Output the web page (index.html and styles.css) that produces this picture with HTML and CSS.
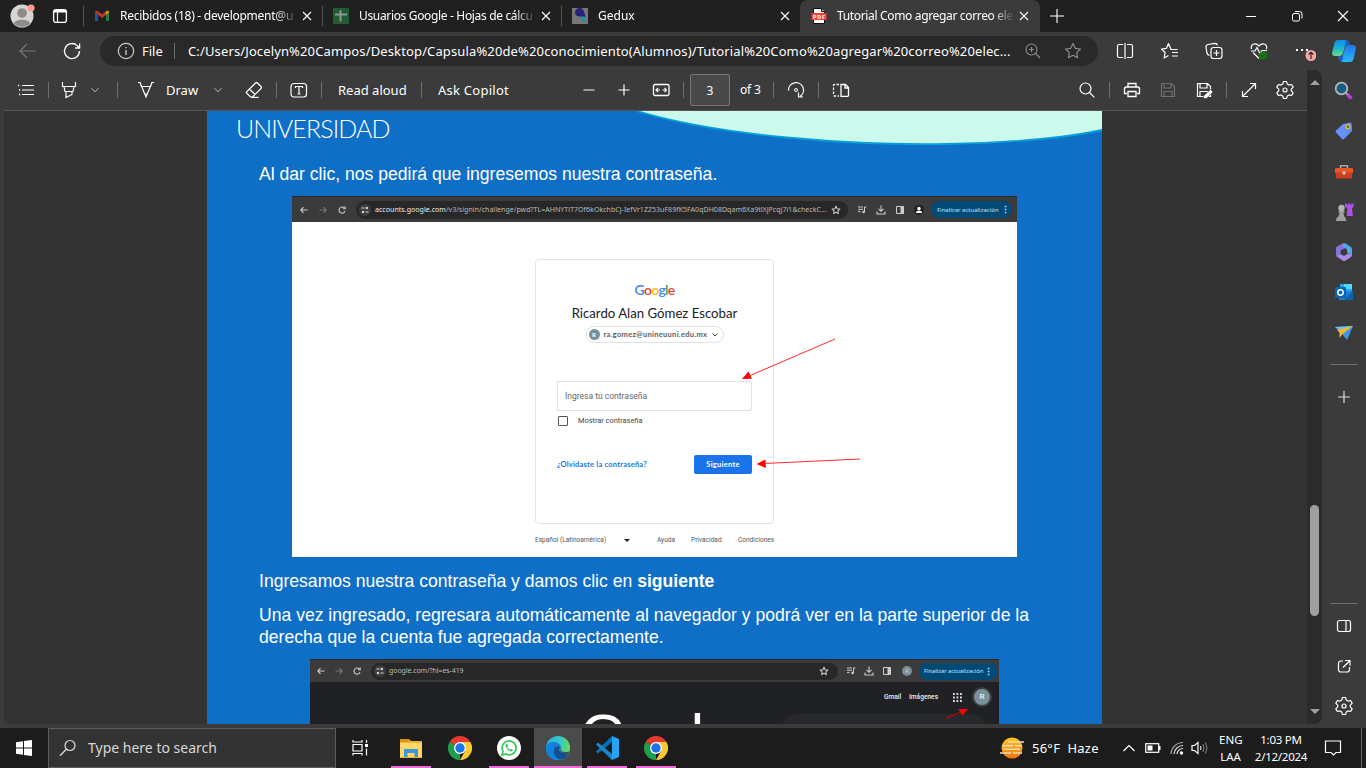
FILE: index.html
```html
<!DOCTYPE html>
<html lang="es">
<head>
<meta charset="utf-8">
<title>Tutorial Como agregar correo electronico</title>
<link rel="stylesheet" href="styles.css">
</head>
<body>
<svg class="defs" aria-hidden="true">
  <symbol id="x" viewBox="0 0 10 10"><path d="M1 1l8 8M9 1l-8 8" fill="none" stroke="currentColor" stroke-width="1.1"/></symbol>
  <symbol id="chev" viewBox="0 0 12 12"><path d="M2.500 4.200L6 7.800l3.500-3.600" fill="none" stroke="currentColor" stroke-width="1"/></symbol>
  <symbol id="gear" viewBox="0 0 24 24"><path d="M10.500 3.500h3l.8 2.600 1.700 1 2.600-.6 1.600 2.600-1.900 2v1.800l1.900 2-1.600 2.600-2.600-.6-1.700 1-.8 2.600h-3l-.8-2.600-1.700-1-2.600.6-1.600-2.600 1.900-2v-1.800l-1.900-2 1.600-2.600 2.600.6 1.700-1z" fill="none" stroke="currentColor" stroke-width="1.200" stroke-linejoin="round"/><circle cx="12" cy="12" r="2" fill="none" stroke="currentColor" stroke-width="1.200"/></symbol>
  <symbol id="star" viewBox="0 0 18 18"><path d="M9 1.500l2.300 4.800 5.200.7-3.800 3.600.9 5.200L9 13.300l-4.600 2.500.9-5.200L1.500 7l5.200-.7z" fill="none" stroke="currentColor" stroke-width="1.200" stroke-linejoin="round"/></symbol>
  <symbol id="ministar" viewBox="0 0 18 18"><path d="M9 2l2.100 4.600 4.900.6-3.600 3.400.9 4.900L9 13.100l-4.300 2.400.9-4.900L2 7.200l4.900-.6z" fill="none" stroke="currentColor" stroke-width="1.900" stroke-linejoin="round"/></symbol>
  <symbol id="chrome" viewBox="0 0 24 24"><path d="M12 12L1.600 6A12 12 0 0 1 22.400 6z" fill="#e33b2e"/><path d="M12 12l0 12A12 12 0 0 1 1.600 6z" fill="#1e9e4a"/><path d="M12 6h10.400A12 12 0 0 1 12 24l5.200-9z" fill="#fcc934"/><circle cx="12" cy="12" r="6" fill="#fff"/><circle cx="12" cy="12" r="4.700" fill="#1a73e8"/></symbol>
  <symbol id="back" viewBox="0 0 10 10"><path d="M8.500 5H2M4.500 2.200L1.800 5l2.700 2.800" fill="none" stroke="currentColor" stroke-width="1.100"/></symbol>
  <symbol id="reload" viewBox="0 0 10 10"><path d="M8 6.200A3.100 3.100 0 1 1 7.300 2.900M8.200 1.500v2.300H5.900" fill="none" stroke="currentColor" stroke-width="1.100"/></symbol>
  <symbol id="tune" viewBox="0 0 12 12"><circle cx="6" cy="6" r="6" fill="#3c3c3c"/><path d="M2.500 4h3M6.500 8h3" stroke="#ddd"/><circle cx="7.800" cy="4" r="1.200" fill="#ddd"/><circle cx="4" cy="8" r="1.200" fill="#ddd"/></symbol>
  <symbol id="music" viewBox="0 0 10 10"><path d="M1 2h5M1 4.300h5M1 6.600h2.500M7.500 7V2h2" fill="none" stroke="currentColor"/><circle cx="6.600" cy="7" r="1.300" fill="currentColor"/></symbol>
  <symbol id="down" viewBox="0 0 10 10"><path d="M5 .5v5.500M2.500 3.800L5 6.300l2.500-2.500M1 6.500v2.500h8V6.500" fill="none" stroke="currentColor" stroke-width="1.100"/></symbol>
  <symbol id="panel" viewBox="0 0 10 10"><path d="M1.500 1.500h7v7h-7z" fill="none" stroke="currentColor"/><path d="M5.500 1.500h3v7h-3z" fill="currentColor"/></symbol>
</svg>

<header class="tabs">
  <svg class="avatar" viewBox="0 0 26 24"><circle cx="12" cy="12" r="11.500" fill="#d8d5d0"/><circle cx="12" cy="9" r="4.800" fill="#8d8a87"/><path d="M4 19.500c1-5 15-5 16 0a11.500 11.500 0 0 1-16 0z" fill="#8d8a87"/><circle cx="21" cy="4" r="3.600" fill="#ff9c98"/></svg>
  <svg class="work" viewBox="0 0 16 16"><rect x="1.600" y="1.600" width="12.800" height="12.800" rx="2.500" fill="none" stroke="#fff" stroke-width="1.300"/><path d="M1.500 4.500V3.500q0-2 2-2h9q2 0 2 2v1z" fill="#fff"/><path d="M5.500 4v10" stroke="#fff" stroke-width="1.200"/></svg>
  <div class="tab">
    <svg class="fav" viewBox="0 0 16 16"><path d="M1 4v9h3V7z" fill="#27569e"/><path d="M15 4v9h-3V7z" fill="#2c7a44"/><path d="M1 4.500V3.500Q2.500 2 4 3.200L8 6.300l4-3.100q1.500-1.200 3 .3v1L8 10z" fill="#b83a31"/><path d="M12 3.200q1.500-1.200 3 .3v1.300L12 7z" fill="#c89a20"/></svg>
    <span class="ttl t1">Recibidos (18) - development@u</span><svg class="cl"><use href="#x"/></svg>
  </div>
  <div class="tab">
    <svg class="fav" viewBox="0 0 16 16"><rect width="16" height="16" rx="1" fill="#235c34"/><path d="M2 6.500h12M7.500 2.500v11" stroke="#8c9a8f" stroke-width="2"/></svg>
    <span class="ttl t2">Usuarios Google - Hojas de cálcu</span><svg class="cl"><use href="#x"/></svg>
  </div>
  <div class="tab">
    <svg class="fav" viewBox="0 0 16 16"><rect width="16" height="16" fill="#777"/><path d="M3 5a4.500 4.500 0 0 1 9-1q1.500 2.500 1 5.500L11 10Q9 8.500 7 8.500 3.500 8 3 5z" fill="#29217d"/><path d="M7 8.500h5q2.500 1 1 4.500l-2 2q-.5-4-4-6.500z" fill="#2791a4"/></svg>
    <span class="ttl">Gedux</span><svg class="cl"><use href="#x"/></svg>
  </div>
  <div class="tab on">
    <svg class="fav" viewBox="0 0 16 16"><path d="M2.500.5h8l3 3v12h-11z" fill="#fff" stroke="#111"/><path d="M10.500.5v3h3" fill="#ccc" stroke="#111"/><rect x=".5" y="5" width="15" height="7" fill="#f4403c"/><text x="8" y="10.700" font-size="5.500" font-weight="700" fill="#fff" text-anchor="middle" textLength="12">PDF</text></svg>
    <span class="ttl t4">Tutorial Como agregar correo ele</span><svg class="cl"><use href="#x"/></svg>
  </div>
  <svg class="newtab" viewBox="0 0 16 16"><path d="M8 1v14M1 8h14" stroke="#fff" stroke-width="1.100"/></svg>
  <div class="winbtns">
    <svg viewBox="0 0 12 12"><path d="M1 6.500h10" stroke="#fff"/></svg>
    <svg viewBox="0 0 12 12"><rect x="1.500" y="3.500" width="7" height="7.500" rx="1.500" fill="none" stroke="#fff"/><path d="M4 1.500h4.500q2.500 0 2.500 2.500v4.500" fill="none" stroke="#fff"/></svg>
    <svg viewBox="0 0 12 12"><path d="M1 1l10 10M11 1L1 11" stroke="#fff" stroke-width="1.100"/></svg>
  </div>
</header>

<nav class="nav">
  <svg class="i dim" viewBox="0 0 24 24"><path d="M20 12H4.500M11 5l-7 7 7 7" fill="none" stroke="currentColor" stroke-width="1.200"/></svg>
  <svg class="i reload" viewBox="0 0 24 24"><path d="M19.500 12a7.500 7.500 0 1 1-2.300-5.400L19.500 9M19.600 4.500V9h-4.500" fill="none" stroke="currentColor" stroke-width="1.300"/></svg>
  <div class="addr">
    <svg class="i" viewBox="0 0 24 24"><circle cx="12" cy="12" r="7.700" fill="none" stroke="#ccc" stroke-width="1.200"/><path d="M12 11v5M12 8v1.300" stroke="#ccc" stroke-width="1.300"/></svg>
    <span class="file">File</span><i class="vs"></i>
    <span class="url">C:/Users/Jocelyn%20Campos/Desktop/Capsula%20de%20conocimiento(Alumnos)/Tutorial%20Como%20agregar%20correo%20elec...</span>
    <svg class="i gray" viewBox="0 0 24 24"><circle cx="10.500" cy="10.500" r="5.500" fill="none" stroke="currentColor" stroke-width="1.100"/><path d="M14.500 14.500l4.500 4.500M8 10.500h5M10.500 8v5" stroke="currentColor" stroke-width="1.200"/></svg>
    <svg class="st gray"><use href="#star"/></svg>
  </div>
  <div class="navr">
    <svg class="i" viewBox="0 0 24 24"><path d="M10 5.500H6q-1.500 0-1.500 1.500v10q0 1.500 1.500 1.500h4M14 5.500h4q1.500 0 1.500 1.500v10q0 1.500-1.500 1.500h-4M12 4v16" fill="none" stroke="currentColor" stroke-width="1.200"/></svg>
    <svg class="i" viewBox="0 0 24 24"><path d="M19.500 10.500H13L10.500 4.500 8.300 9.400l-4.800.7 3.600 3.400-1 5.500 4.400-2.500M14 13.500h6M14 17h6" fill="none" stroke="currentColor" stroke-width="1.200" stroke-linejoin="round"/></svg>
    <svg class="i" viewBox="0 0 24 24"><rect x="9" y="8.500" width="11" height="11" rx="2.500" fill="none" stroke="currentColor" stroke-width="1.200"/><path d="M14.500 11v6M11.500 14h6M7.500 16.500Q5.500 16 5 14L4 8.500Q3.700 6 6 5.500l7-1.200q2 0 2.500 2" fill="none" stroke="currentColor" stroke-width="1.200"/></svg>
    <svg class="i" viewBox="0 0 24 24"><path d="M4.500 10Q3.500 6 7 5q3-.5 5 2 2-2.500 5-2 3.500 1 2.500 5M6 13.500l6 6M4 12h4l2-3.500 3 6 2-3h5" fill="none" stroke="currentColor" stroke-width="1.200"/><circle cx="16" cy="16.500" r="4" fill="#107c10"/><path d="M14.200 16.500l1.300 1.300 2.500-2.500" fill="none" stroke="#232"/></svg>
    <svg class="i more" viewBox="0 0 24 24"><path d="M4 11h2M9 11h2M14 11h2" stroke="currentColor" stroke-width="2"/><circle cx="19" cy="16.500" r="5.500" fill="#f6a5a1"/><path d="M19 20v-6.500M16.700 15.500l2.300-2.300 2.300 2.300" fill="none" stroke="#222" stroke-width="1.100"/></svg>
    <svg class="cop" viewBox="0 0 24 24"><defs><linearGradient id="c1" x1="0" y1="0" x2="0" y2="1"><stop offset="0" stop-color="#188be8"/><stop offset=".5" stop-color="#18b3d3"/><stop offset="1" stop-color="#70db77"/></linearGradient><linearGradient id="c2" x1="0" y1="0" x2="0" y2="1"><stop offset="0" stop-color="#2275e8"/><stop offset="1" stop-color="#22bcf7"/></linearGradient></defs><path d="M6 1h8q3 0 3.500 5H15q-2 0-2.500 3l-1.500 5q-1 3-4 3H3q-4 0-2.500-5L2.500 4q1-3 3.500-3z" fill="url(#c1)"/><path d="M14 1q3 0 3.500 5H15q-2 0-2.500 3z" fill="#1462bb"/><path d="M18 23h-8q-3 0-3.500-6H9q2 0 2.500-3l1.500-5q1-3 4-3h4q4 0 2.500 5l-2 9q-1 3-3.500 3z" fill="url(#c2)"/><path d="M10 23q-3 0-3.500-6H9q2 0 2.500-2z" fill="#1b58d8"/></svg>
  </div>
</nav>

<main class="main">
  <section class="viewer">
    <div class="content">
      <div class="bar">
        <svg class="i m10" viewBox="0 0 24 24"><path d="M8 7.500h12M8 12h12M8 16.500h12" stroke="currentColor" stroke-width="1.200"/><path d="M4 7.500h1.200M5 12h1.200M5 16.500h1.200" stroke="currentColor" stroke-width="1.300"/></svg>
        <i class="vs m10"></i>
        <svg class="i m8" viewBox="0 0 24 24"><path d="M5.500 4v4.500h13V4M7 8.500l1 5h8l1-5M9 13.500v6l6-3v-3" fill="none" stroke="currentColor" stroke-width="1.200"/></svg>
        <svg class="ch m8"><use href="#chev"/></svg>
        <i class="vs m16"></i>
        <svg class="i m16" viewBox="0 0 24 24"><path d="M4 4.500h2l6 14.500 6-14.500h2M6 4.500L7.500 8.500h9L18 4.500M10.500 16h3" fill="none" stroke="currentColor" stroke-width="1.200"/></svg>
        <span class="lb m8 w32">Draw</span>
        <svg class="ch m14"><use href="#chev"/></svg>
        <svg class="i m18" viewBox="0 0 24 24"><path d="M4.500 14l9-9q1-1 2 0l3.500 3.500q1 1 0 2l-8.500 8.500H8.500L4.500 15q-.5-.5 0-1zM7.500 11l5.500 5.500M9 19.300h7.500" fill="none" stroke="currentColor" stroke-width="1.200"/></svg>
        <i class="vs m10"></i>
        <svg class="i m10" viewBox="0 0 24 24"><rect x="4" y="5.500" width="15.500" height="13.500" rx="3" fill="none" stroke="currentColor" stroke-width="1.200"/><path d="M8.500 10V8.500h7V10M12 8.500V16M10.500 16h3" fill="none" stroke="currentColor" stroke-width="1.200"/></svg>
        <i class="vs m10"></i>
        <span class="lb m16 w70">Read aloud</span>
        <i class="vs m13"></i>
        <span class="lb m16 w72 ask">Ask Copilot</span>
        <svg class="i m67" viewBox="0 0 24 24"><path d="M6.500 12h11" stroke="#bbb" stroke-width="1.300"/></svg>
        <svg class="i m11" viewBox="0 0 24 24"><path d="M6.500 12h11M12 6.500v11" stroke="currentColor" stroke-width="1.200"/></svg>
        <svg class="i m13" viewBox="0 0 24 24"><rect x="4.500" y="6.500" width="15.500" height="11" rx="1.500" fill="none" stroke="currentColor" stroke-width="1.300"/><path d="M7 12h4M13.500 12h4M9 10l-2 2 2 2M15.500 10l2 2-2 2" fill="none" stroke="currentColor" stroke-width="1.100"/></svg>
        <i class="vs m10"></i>
        <span class="pg m6">3</span>
        <span class="of m10">of 3</span>
        <i class="vs m12"></i>
        <svg class="i m10" viewBox="0 0 24 24"><path d="M4.500 12.500a7.500 7.500 0 1 1 11.500 6M19 19h-4.500v-4.500" fill="none" stroke="currentColor" stroke-width="1.200"/><circle cx="12" cy="12" r="1.500" fill="none" stroke="currentColor"/></svg>
        <i class="vs m10"></i>
        <svg class="i m10" viewBox="0 0 24 24"><path d="M12 6.500h4.500l3 3v8q0 .8-.8.800H12zM16 6.500v3.500h3.500" fill="none" stroke="currentColor" stroke-width="1.300"/><path d="M10 6.500H5.500q-1 0-1 1v9.500q0 1 1 1H10" fill="none" stroke="currentColor" stroke-width="1.300" stroke-dasharray="2.500 1.500"/></svg>
        <svg class="i m222" viewBox="0 0 24 24"><circle cx="10.500" cy="10.500" r="5.500" fill="none" stroke="currentColor" stroke-width="1.200"/><path d="M14.500 14.500l4.800 4.800" stroke="currentColor" stroke-width="1.200"/></svg>
        <i class="vs m10"></i>
        <svg class="i m10" viewBox="0 0 24 24"><path d="M8 9V5.500h8V9M7 15.500H4.500V11q0-2 2-2h11q2 0 2 2v4.500H17M8 13.500h8v5H8z" fill="none" stroke="currentColor" stroke-width="1.300"/></svg>
        <svg class="i m12 dk" viewBox="0 0 24 24"><path id="fl" d="M5.500 5.500h10l3 3v10h-13zM8 5.500v4.500h7V5.500M8 18.500v-5h8v5" fill="none" stroke="currentColor" stroke-width="1.200"/></svg>
        <svg class="i m12" viewBox="0 0 24 24"><use href="#fl"/><path d="M18.500 11.500l2.500 2.500-6.500 6.500H11.500V18z" fill="#fff" stroke="#3b3b3b" stroke-width=".6"/></svg>
        <i class="vs m10"></i>
        <svg class="i m10" viewBox="0 0 24 24"><path d="M5.500 18.500L18.500 5.500M13 5.500h5.500V11M5.500 13v5.500H11" fill="none" stroke="currentColor" stroke-width="1.200"/></svg>
        <svg class="i m12"><use href="#gear"/></svg>
      </div>
      <div class="doc">
        <article class="page">
          <svg class="wave" viewBox="0 0 465 35"><path d="M0 0C85 26 220 34.500 310 33Q410 31 465 19V0z" fill="#cbf9ec"/><path d="M-2 -.5C85 26 220 34.500 310 33Q410 31 465 19" fill="none" stroke="#05a0d8" stroke-width="1.800"/></svg>
          <div class="uni">UNIVERSIDAD</div>
          <p class="p1">Al dar clic, nos pedirá que ingresemos nuestra contraseña.</p>
          <div class="shot s1">
            <div class="cbar">
              <svg class="s"><use href="#back"/></svg><svg class="s flip"><use href="#back"/></svg><svg class="s"><use href="#reload"/></svg>
              <div class="cpill"><svg class="tune"><use href="#tune"/></svg><span class="curl"><b>accounts.google.com</b>/v3/signin/challenge/pwd?TL=AHNYTlT7Of6kOkchbCj-IefVr1ZZ53uF89fK5FA0qDH08Dqam6Xa9tlXjPcqj7i1&amp;checkC...</span><svg class="s"><use href="#ministar"/></svg></div>
              <svg class="s ms"><use href="#music"/></svg><svg class="s"><use href="#down"/></svg><svg class="s"><use href="#panel"/></svg>
              <svg class="s" viewBox="0 0 10 10"><circle cx="5" cy="5" r="5" fill="#202020"/><circle cx="5" cy="3.500" r="1.700" fill="#fff"/><path d="M2 8Q2 5.500 5 5.500T8 8z" fill="#fff"/></svg>
              <div class="upd"><span>Finalizar actualización</span><b>⋮</b></div>
            </div>
            <div class="login">
              <div class="card">
                <div class="glogo"><b class="gb">G</b><b class="gr">o</b><b class="gy">o</b><b class="gb">g</b><b class="gg">l</b><b class="gr">e</b></div>
                <div class="name">Ricardo Alan Gómez Escobar</div>
                <div class="chip"><i>R</i><span>ra.gomez@unineuuni.edu.mx</span><svg viewBox="0 0 12 12"><path d="M2.500 4L6 7.500 9.500 4" fill="none" stroke="#444" stroke-width="1.500"/></svg></div>
                <div class="input"><span>Ingresa tu contraseña</span></div>
                <div class="check"><i></i><span>Mostrar contraseña</span></div>
                <div class="acts"><a>¿Olvidaste la contraseña?</a><button>Siguiente</button></div>
              </div>
              <div class="foot"><span class="f1">Español (Latinoamérica)</span><i></i><span class="f2">Ayuda</span><span class="f3">Privacidad</span><span class="f4">Condiciones</span></div>
            </div>
            <svg class="arrows" viewBox="0 0 725 361"><g fill="#f00" stroke="none"><path d="M450 183l6.500-7.500 3.500 7.300z"/><path d="M464.500 268l9-4.500.4 8.500z"/></g><path d="M543 143l-86 37M568 263l-96 4.500" stroke="#ff2a2a" stroke-width="1"/></svg>
          </div>
          <p class="p2">Ingresamos nuestra contraseña y damos clic en <b>siguiente</b></p>
          <p class="p3">Una vez ingresado, regresara automáticamente al navegador y podrá ver en la parte superior de la<br><span>derecha que la cuenta fue agregada correctamente.</span></p>
          <div class="shot s2">
            <div class="cbar">
              <svg class="s"><use href="#back"/></svg><svg class="s flip"><use href="#back"/></svg><svg class="s"><use href="#reload"/></svg>
              <div class="cpill"><svg class="tune"><use href="#tune"/></svg><span class="curl">google.com/?hl=es-419</span><svg class="s"><use href="#ministar"/></svg></div>
              <svg class="s"><use href="#music"/></svg><svg class="s"><use href="#down"/></svg><svg class="s"><use href="#panel"/></svg>
              <i class="mini">R</i>
              <div class="upd"><span>Finalizar actualización</span><b>⋮</b></div>
            </div>
            <div class="ghome">
              <div class="gtop"><span class="gm">Gmail</span><span class="im">Imágenes</span><svg viewBox="0 0 9 9"><path d="M0 1h9M0 4.500h9M0 8h9" stroke="#ddd" stroke-width="1.800" stroke-dasharray="1.800 1.700"/></svg><i>R</i></div>
              <div class="gbig"><span>G</span><span>l</span></div>
              <div class="gpill"></div>
              <svg class="garrow" viewBox="0 0 24 12"><path d="M0 10.500L14 4" stroke="#c40000" stroke-width="1.200"/><path d="M22.500 1l-6.500 6.500-3.500-6.500z" fill="#f00"/></svg>
            </div>
          </div>
        </article>
      </div>
    </div>
    <div class="scroll"><i class="up"></i><i class="thumb"></i><i class="dn"></i></div>
  </section>
  <aside class="side">
    <svg viewBox="0 0 20 20"><circle cx="7.500" cy="7.500" r="5.800" fill="#155d86" stroke="#b8b8b8" stroke-width="1.800"/><path d="M12 12l2 2" stroke="#aaa" stroke-width="2"/><path d="M13.700 13.700l3.800 3.800" stroke="#c23df0" stroke-width="3.300"/></svg>
    <svg viewBox="0 0 20 20"><path d="M9 3l7-1.500q1.500 0 1.700 1.500l.3 6q0 1-1 2l-7 7q-1 1-2 0L2 11.500q-1-1 0-2z" fill="#6490f8"/><circle cx="14" cy="5.700" r="1.900" fill="#555" stroke="#e5c210" stroke-width="1.200"/></svg>
    <svg viewBox="0 0 20 20"><path d="M6.500 7V4.700h7V7" fill="none" stroke="#aaa" stroke-width="1.500"/><path d="M1 8q0-1 1-1h16q1 0 1 1v4H1z" fill="#e8562a"/><path d="M2 11.500h16v5q0 1-1 1H3q-1 0-1-1z" fill="#c8401d"/><circle cx="10" cy="12" r="1.700" fill="#ccc"/></svg>
    <svg viewBox="0 0 20 20"><path d="M11 1.500h2V3h1.200V1.500h2.300V3h1V1.500h2v3.500l-1.500 1 .8 8h-6l.5-8-2.300-1z" fill="#b052e8"/><circle cx="7.500" cy="6" r="3.200" fill="#b4b4b4"/><path d="M4.500 9h6v1.500h-1q0 4 2 5.500l1 3H2l.5-3q3-2 3-5.500h-1z" fill="#a0a0a0"/></svg>
    <svg viewBox="0 0 20 20"><path d="M9.500 1L3 4.500Q2 5 2 6.500V14l4.500-2V8.500L13 5z" fill="#8274dc"/><path d="M9.500 1q1 0 2 .5L17 5q1 .5 1 2v6.500l-5-3V7.500L8.500 4.500z" fill="#53a5ed"/><path d="M18 13q0 1.500-1 2l-5.500 3.500q-1.500 1-3 0L2 14l4.500-2 3.500 2 4-2.500z" fill="#a98bec"/></svg>
    <svg viewBox="0 0 20 20"><path d="M6 2h12v8H6z" fill="#25a7e9"/><path d="M10 2h8v5h-8z" fill="#50d9ff"/><path d="M5 9h14v9H5z" fill="#1680d2"/><path d="M19 9l-9 9h9z" fill="#0f5faa"/><rect x="1" y="5" width="11" height="11" rx="1" fill="#0364b8"/><circle cx="6.500" cy="10.500" r="2.700" fill="none" stroke="#fff" stroke-width="1.500"/></svg>
    <svg viewBox="0 0 20 20"><path d="M1 5l18-1-6 14-5-6z" fill="#3b96ee"/><path d="M1 5l18-1L8 9z" fill="#64c8fa"/><path d="M19 4L3 8l2.500 2.500V16L8.500 12z" fill="#f6b928"/></svg>
    <i class="hr"></i>
    <svg class="pl" viewBox="0 0 20 20"><path d="M10 4v12M4 10h12" stroke="#ddd" stroke-width="1.200"/></svg>
    <i class="hr h2"></i>
    <svg class="sb" viewBox="0 0 20 20"><rect x="3.500" y="4.500" width="13" height="11" rx="2" fill="none" stroke="#fff" stroke-width="1.200"/><path d="M12 4.500v11" stroke="#fff" stroke-width="1.200"/></svg>
    <svg class="sb" viewBox="0 0 20 20"><path d="M9 5H7Q4.500 5 4.500 7.500v6Q4.500 16 7 16h6q2.500 0 2.500-2.500V11M11 4.500h5v5M16 4.500l-7 7" fill="none" stroke="#fff" stroke-width="1.200"/></svg>
    <svg class="sb gg2"><use href="#gear"/></svg>
  </aside>
</main>

<footer class="task">
  <div class="start"><svg viewBox="0 0 16 16"><path d="M0 2.200l7-1v6.300H0zM8 1l8-1v7.500H8zM0 8.500h7v6.300l-7-1zM8 8.500h8V16l-8-1z" fill="#fff"/></svg></div>
  <div class="search"><svg viewBox="0 0 18 18"><circle cx="11" cy="6.500" r="5" fill="none" stroke="#ddd" stroke-width="1.200"/><path d="M7.500 10L1 16.800" stroke="#ddd" stroke-width="1.300"/></svg><span>Type here to search</span></div>
  <div class="app nb"><svg class="tv" viewBox="0 0 16 16"><path d="M1 4.500h9v6.500H1zM1 0v2h9V0M1 15.500V13.500h9v2M14.500 0v3M14.500 8.500v7" fill="none" stroke="#fff" stroke-width="1.200"/><path d="M13 4h3v3h-3z" fill="#fff"/></svg></div>
  <div class="app ex"><svg viewBox="0 0 24 24"><path d="M1 3h9l2 2h11v17H1z" fill="#f0b429"/><path d="M1 3h9v3H1z" fill="#db9412"/><path d="M1 7h22v14H1z" fill="#ffd76b"/><path d="M5 13h14v8h-3.500v-4h-7v4H5z" fill="#3c96dc"/></svg></div>
  <div class="app ch1"><svg><use href="#chrome"/></svg></div>
  <div class="app wa"><svg viewBox="0 0 24 24"><circle cx="12" cy="12" r="12" fill="#fff"/><path d="M5 19l1-3.700A7 7 0 1 1 8.700 18z" fill="none" stroke="#35c85a" stroke-width="1.700"/><path d="M9 8q-1 1 0 3 2 4 5 4.500 2-.2 2-1.800l-2-1-1 1q-2-.8-2.700-2.700l.7-1L10 7.800z" fill="#35c85a"/></svg></div>
  <div class="app ed"><svg viewBox="0 0 24 24"><defs><linearGradient id="e1"><stop offset="0" stop-color="#27aee4"/><stop offset=".6" stop-color="#37c9c5"/><stop offset="1" stop-color="#6ae04f"/></linearGradient></defs><circle cx="12" cy="12" r="12" fill="url(#e1)"/><path d="M0 12q1-6 7-6 7 0 8 5l-2 3q1 4 9 3-3 7-10 7Q0 23.500 0 12z" fill="#1480d8"/><path d="M8 13q2-4 6-2l-1 3q1 4 9.500 3.500-2 5-8 6.200Q7 21 8 13z" fill="#104f96"/><path d="M13.500 14q1.500-1 1.500-3.500.5 2-.5 4 3 2.500 9 1L22.500 17.500q-7.500 1-9-3.500z" fill="#4b4b4b"/></svg></div>
  <div class="app vs1"><svg viewBox="0 0 24 24"><path d="M17 0l7 3v18l-7 3z" fill="#26a3f2"/><path d="M17 6L3 17.500l-2-2L17 0z" fill="#0a70b8"/><path d="M17 18L3 6.500l-2 2L17 24z" fill="#1788d2"/></svg></div>
  <div class="app ch2"><svg><use href="#chrome"/></svg></div>
  <div class="tray">
    <svg class="haze" viewBox="0 0 24 22"><defs><linearGradient id="h" x2="0" y2="1"><stop offset="0" stop-color="#ffc91f"/><stop offset="1" stop-color="#f2730d"/></linearGradient></defs><circle cx="12" cy="11" r="10.500" fill="url(#h)"/><path d="M8 5h16M2 8.700h11M15 8.700h7M3 12.300h17M0 16h11M13 16h9" stroke="#f2dcb8" stroke-width="1.600"/></svg>
    <span class="tmp">56°F&nbsp; Haze</span>
    <svg class="car" viewBox="0 0 14 10"><path d="M1.500 8L7 2.500 12.500 8" fill="none" stroke="#fff" stroke-width="1.200"/></svg>
    <svg class="bat" viewBox="0 0 16 10"><rect x=".7" y=".7" width="13" height="8.600" fill="none" stroke="#fff" stroke-width="1.200"/><path d="M14 3h1.500v4H14z" fill="#fff"/><path d="M2.500 2.500h5v5h-5z" fill="#fff"/></svg>
    <svg class="wifi" viewBox="0 0 14 14"><g fill="none" stroke="#aaa" stroke-width="1.200"><path d="M1 13A12 12 0 0 1 13 1.500"/><path d="M4 13a9 9 0 0 1 9-8.500" stroke="#ddd"/><path d="M7 13a6 6 0 0 1 6-5.500" stroke="#eee"/></g><circle cx="11.500" cy="12" r="1.700" fill="#fff"/></svg>
    <svg class="spk" viewBox="0 0 18 14"><path d="M1 4.500h2.500L7 1.500v11L3.500 9.500H1z" fill="none" stroke="#fff" stroke-width="1.200"/><path d="M9.500 5q1 2 0 4" fill="none" stroke="#fff"/><path d="M12 3q2 4 0 8M14.500 1.500q3 5.500 0 11" fill="none" stroke="#888"/></svg>
    <span class="lang">ENG<br>LAA</span>
    <span class="clock">1:03 PM<br>2/12/2024</span>
    <svg class="note" viewBox="0 0 18 18"><path d="M1.500 2h15v11.500H12L9.500 16 7 13.500H1.500z" fill="none" stroke="#fff" stroke-width="1.200"/></svg>
    <i class="desk"></i>
  </div>
</footer>
</body>
</html>
```
FILE: styles.css
```css
*{box-sizing:border-box}
body{margin:0;width:1366px;height:768px;overflow:hidden;background:#3b3b3b;color:#fff;font:13px/1 "Noto Sans",sans-serif;display:flex;flex-direction:column}
svg,i,span{flex:none;display:block}
i{font-style:normal}
span,p{white-space:nowrap}
.defs{width:0;height:0;position:absolute}
.i{width:24px;height:24px}
.vs{width:1px;height:16px;background:#6e6e6e}

.tabs{flex:none;height:32px;background:#202020;display:flex;align-items:center;padding-left:10px}
.avatar{width:26px;height:24px}
.work{width:16px;height:16px;margin:0 15px 0 16px}
.tab{width:239px;height:32px;display:flex;align-items:center;padding-left:11px;font-size:12px;position:relative}
.tab:not(.on)::before{content:"";position:absolute;left:0;top:6px;width:1px;height:20px;background:#555}
.fav{width:16px;height:16px;margin-right:10px}
.ttl{width:178px;height:20px;line-height:20px;margin-right:4px;-webkit-mask-image:linear-gradient(90deg,#000 155px,transparent 178px);mask-image:linear-gradient(90deg,#000 155px,transparent 178px)}
.t1{letter-spacing:-.25px}
.t2,.t4{letter-spacing:-.34px}
.cl{width:10px;height:10px}
.on{background:#3b3b3b;border-radius:8px 8px 0 0;width:240px}
.newtab{width:16px;height:16px;margin-left:9px}
.winbtns{display:flex;gap:34px;margin-left:auto;padding-right:17px}
.winbtns svg{width:12px;height:12px}

.nav{flex:none;height:38px;display:flex;align-items:center;padding-left:16px}
.dim{color:#777}
.reload{margin:0 16px 0 20px}
.addr{width:998px;height:30px;border-radius:15px;background:#292929;display:flex;align-items:center;padding-left:14px}
.file{width:22px;margin:0 10px 0 4px}
.url{width:824px;margin:0 9px 0 13px;letter-spacing:.13px}
.gray{color:#8c8c8c}
.st{width:18px;height:18px;margin-left:19px}
.navr{display:flex;align-items:center;gap:20.700px;margin-left:15px}
.cop{width:24px;height:24px;margin-left:-4px}

.main{flex:none;height:658px;display:flex}
.viewer{width:1318px;height:654px;margin-left:4px;border-radius:8px;overflow:hidden;display:flex;background:#333}
.content{width:1303px}
.bar{height:41px;background:#3b3b3b;border-bottom:1px solid #555;display:flex;align-items:center}
.bar .dk{color:#6e6e6e}
.ask{letter-spacing:.25px}
.ch{width:12px;height:12px;color:#bbb}
.m6{margin-left:6px}.m8{margin-left:8px}.m10{margin-left:10px}.m11{margin-left:11px}.m12{margin-left:12px}.m13{margin-left:13px}.m14{margin-left:14px}.m16{margin-left:16px}.m18{margin-left:18px}.m67{margin-left:67px}.m222{margin-left:222px}
.w32{width:32px}.w70{width:70px}.w72{width:72px}
.pg{width:40px;height:32px;border:1px solid #777;border-radius:2px;background:#484848;text-align:center;line-height:31px;font-size:12px}
.of{width:21px;font-size:12px;letter-spacing:-.2px}
.doc{height:613px;overflow:hidden;padding-left:203px}
.page{width:895px;height:613px;background:#0f6fc7;position:relative;font-family:"Liberation Sans",sans-serif}
.wave{position:absolute;right:0;top:0;width:465px;height:35px}
.page p{margin:0 0 0 52px;font-size:17.580px;line-height:22px}
.uni{font:300 25px/32px Lato,sans-serif;padding:1px 0 0 29px;height:52px;letter-spacing:-.9px}
.p1{height:33px}
.shot{overflow:hidden;position:relative}
.s1{width:725px;height:361px;margin:0 0 0 85px;background:#fff}
.p2{padding-top:13px;height:47px}
.p3{height:55px}
.s2{width:689px;height:66px;margin-left:103px;background:#202124}
.cbar{height:26px;background:#3b3b3b;border-top:1px solid #2a2a2a;display:flex;align-items:center;padding-left:7px;gap:9px;color:#ccc;font-family:"Noto Sans",sans-serif;font-size:7px}
.s{width:10px;height:10px}
.flip{transform:scaleX(-1);color:#777}
.cpill{width:492px;height:18px;border-radius:9px;background:#282828;display:flex;align-items:center;padding-left:3px}
.tune{width:12px;height:12px}
.curl{width:453px;margin:0 3px 0 4px;color:#bbb;line-height:10px;letter-spacing:.04px}
.curl b{font-weight:400;color:#eee}
.upd{width:81px;height:17px;border-radius:9px;background:#004a77;color:#c2e7ff;display:flex;align-items:center;padding-left:6px;font-size:6px;margin-left:-2px}
.upd span{width:64px}
.upd b{font-size:9px}
.s2 .cbar{height:23px;gap:8px;padding-left:6px}
.s2 .cpill{width:467px;height:17px;margin-left:1px}
.s2 .curl{width:427px;margin-left:3px;letter-spacing:-.08px}
.s2 .upd{margin-left:-1px;width:79px;padding-left:5px}
.s2 .upd span{width:60px;letter-spacing:-.1px}
.mini{width:10px;height:10px;margin-left:2px;border-radius:50%;background:#78909c;text-align:center;font-size:6px;line-height:10px}
.login{padding:37px 0 0 243px;color:#444}
.card{width:239px;height:265px;border:1px solid #e3e4e6;border-radius:4px;padding:21px 21px 0;display:flex;flex-direction:column}
.glogo{font:14px/18px Lato,sans-serif;text-align:center;letter-spacing:-.7px}
.glogo b{font-weight:600}
.gb{color:#4285f4}.gr{color:#ea4335}.gy{color:#fbbc05}.gg{color:#34a853}
.name{font:13.200px/16px Lato,sans-serif;color:#202124;text-align:center;white-space:nowrap;margin:6px -5px 0}
.chip{width:138px;height:17px;align-self:center;margin-top:5px;border:1px solid #dfe1e4;border-radius:9px;display:flex;align-items:center;padding-left:2px;font:700 7.500px/10px Lato,sans-serif;color:#5a5d61}
.chip i{width:11px;height:11px;border-radius:50%;background:#78909c;color:#fff;font-size:6px;line-height:11px;text-align:center;margin-right:4px}
.chip span{width:105px;letter-spacing:.31px}
.chip svg{width:8px;height:8px;margin-left:2px}
.input{height:30px;border:1px solid #dfe0e3;border-radius:2px;margin-top:38px;padding-left:7px;display:flex;align-items:center;font:8.500px/10px Roboto,sans-serif;color:#666}
.check{display:flex;align-items:center;margin-top:4px;height:12px;font:7.400px/10px Roboto,sans-serif}
.check i{width:10px;height:10px;border:1px solid #555;border-radius:1px;margin:0 10px 0 1px}
.acts{display:flex;justify-content:space-between;align-items:center;margin-top:28px;font:700 7.500px/10px Lato,sans-serif;letter-spacing:.22px;color:#1a73e8}
.acts button{width:58px;height:19px;border:0;padding:0;border-radius:2px;background:#1a73e8;color:#fff;font:inherit;letter-spacing:.25px}
.foot{display:flex;align-items:center;height:12px;margin-top:10px;font:6.550px/10px Roboto,sans-serif;color:#555}
.foot i{width:0;border:3px solid transparent;border-top-color:#222;border-bottom:0;margin:0 27px 0 18px}
.f1{width:71px}.f2{width:34px}.f3{width:47px}
.arrows{position:absolute;left:0;top:0;width:725px;height:361px}
.ghome{position:relative;height:43px;overflow:hidden}
.gtop{display:flex;align-items:center;height:30px;padding-left:574px;font:500 6.600px/10px Roboto,sans-serif;color:#eee}
.gm{width:25px}.im{width:44px}
.gtop svg{width:9px;height:9px}
.gtop i{width:20px;height:20px;margin-left:10px;border-radius:50%;border:2px solid #3a3c40;background:#78909c;font-size:8px;line-height:16px;text-align:center}
.gbig{position:absolute;left:270px;top:24px;display:flex;gap:64px;font:60px/60px "Liberation Sans",sans-serif}
.gpill{position:absolute;left:470px;top:32px;width:208px;height:40px;border-radius:18px;background:#28292c}
.garrow{position:absolute;left:636px;top:26px;width:24px;height:12px}
.scroll{width:15px;background:#2b2b2b;display:flex;flex-direction:column;align-items:center}
.up,.dn{width:0;border:5px solid transparent;border-top:0;border-bottom-color:#a0a0a0;margin-top:10px}
.thumb{width:9px;height:111px;border-radius:5px;background:#9f9f9f;margin-top:420px}
.dn{border-top:5px solid #a0a0a0;border-bottom:0;margin-top:93px}
.side{width:44px;display:flex;flex-direction:column;align-items:center;padding-top:11px}
.side svg{width:20px;height:20px;margin-bottom:20.200px}
.side .hr{width:28px;height:1px;background:#707070;margin-top:2px}
.side .pl{margin:22px 0 0}
.side .h2{margin:196px 0 12px}
.side .sb{margin-bottom:20px}
.side .gg2{width:24px;height:24px;margin:-2px 0 0}

.task{flex:none;height:40px;background:#1c1c1c;display:flex;align-items:center}
.start{width:48px;display:flex;justify-content:center}
.start svg{width:16px;height:16px}
.search{width:288px;height:40px;background:#333;border:1px solid #5c5c5c;display:flex;align-items:center;padding-left:10px;color:#d8d8d8;font-size:14px}
.search svg{width:18px;height:18px;margin-right:11px}
.app{width:40px;height:40px;display:flex;justify-content:center;align-items:center;border-bottom:2px solid #f06ad8;padding-top:2px}
.app svg{width:24px;height:24px}
.app .tv{width:16px;height:16px}
.nb{width:48px;border:0;padding:0}
.ex{margin:0 9px 0 7px}
.wa{margin:0 5px 0 9px}
.ed{width:48px;background:#4b4b4b;margin-right:5px}
.ch1{border:0;padding:0}
.ch2{margin-left:9px}
.tray{margin-left:auto;display:flex;align-items:center}
.haze{width:24px;height:22px}
.tmp{width:67px;margin:0 23px 0 8px;letter-spacing:.25px}
.car{width:14px;height:10px}
.bat{width:16px;height:10px;margin:0 9px}
.wifi{width:14px;height:14px}
.spk{width:18px;height:14px;margin:0 10px 0 7px}
.lang,.clock{font-size:11.500px;line-height:17px;text-align:center;width:23px}
.clock{width:54px;margin:0 16px 0 12px;letter-spacing:-.25px}
.note{width:18px;height:18px}
.desk{width:1px;height:40px;background:#666;margin:0 4px 0 19px}
```
